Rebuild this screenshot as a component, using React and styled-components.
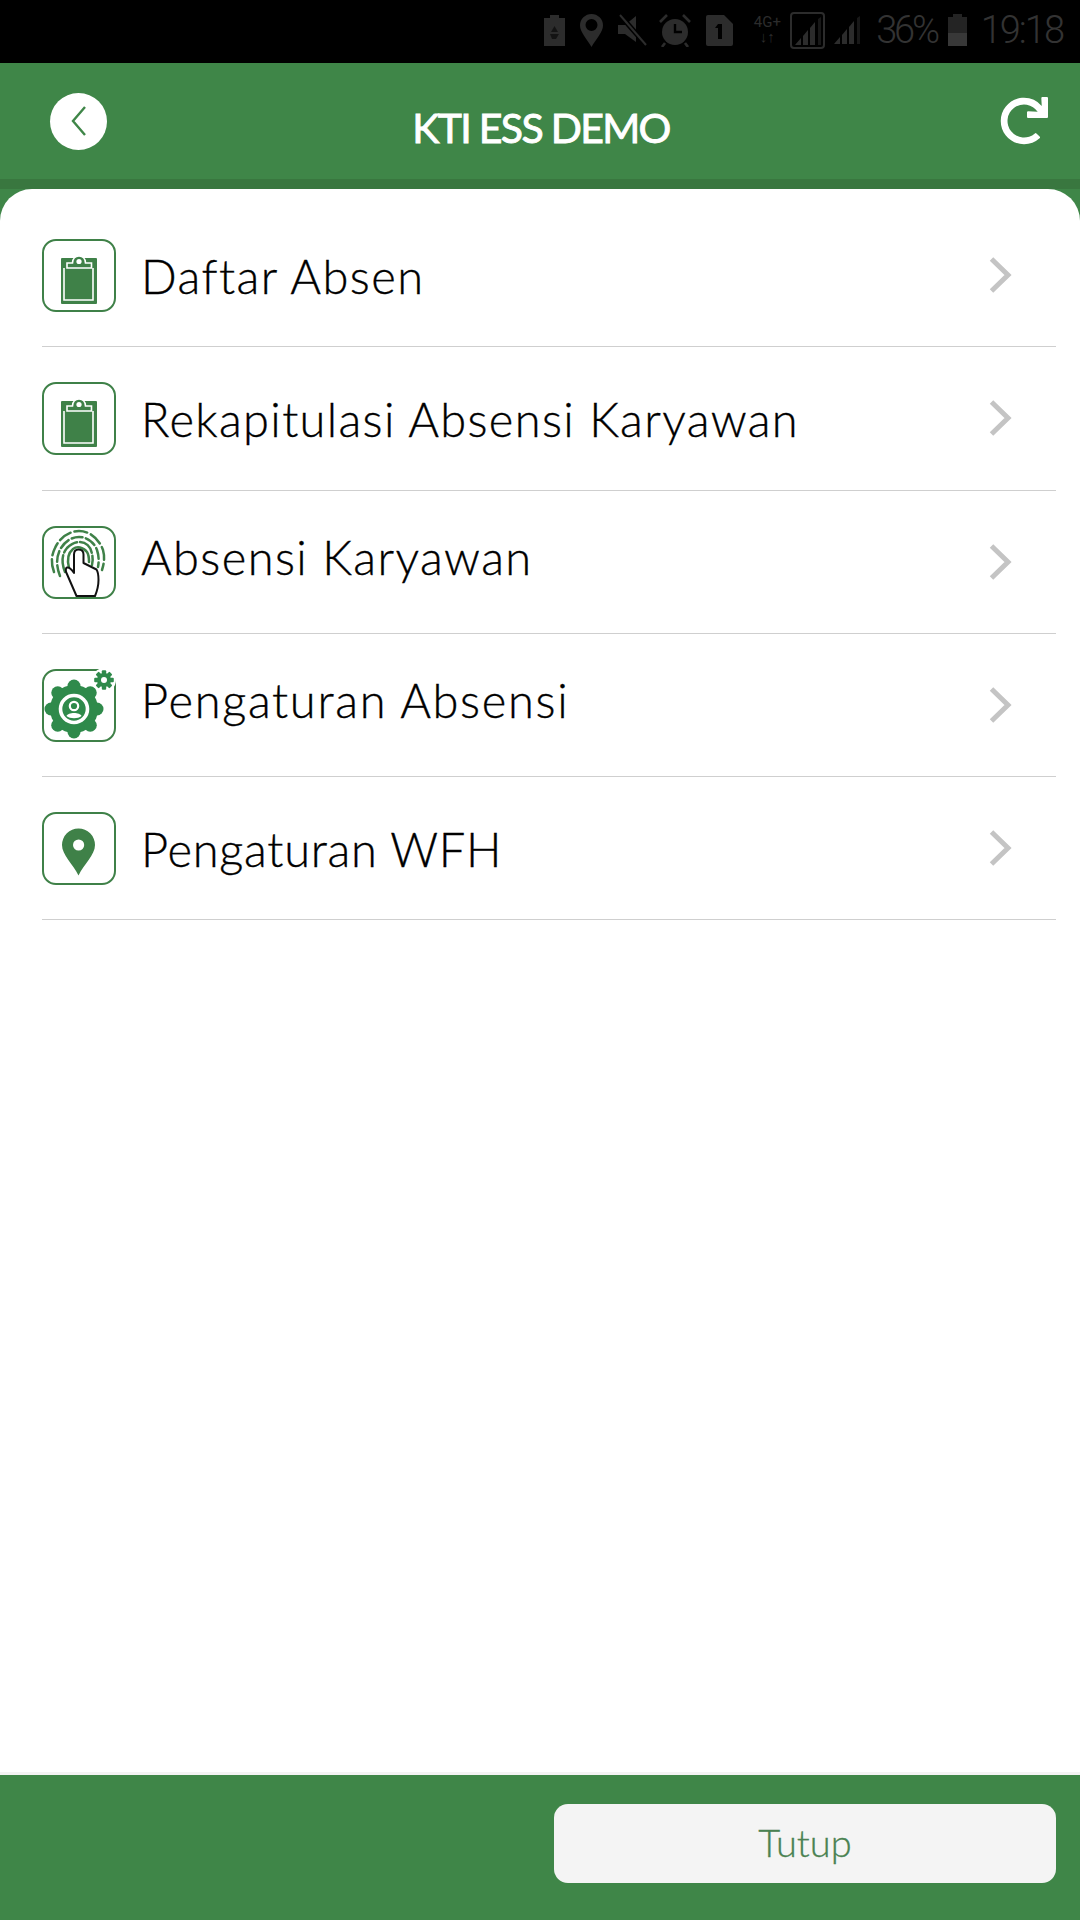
import React from 'react';
import styled, { createGlobalStyle } from 'styled-components';
import { FaRedo } from 'react-icons/fa';

const GREEN = '#3f8648';
const ICON_GREEN = '#3f8148';
const GEAR_GREEN = '#2f8a4b';
const STATUS = '#2c2c2c';

const GlobalStyle = createGlobalStyle`
  html, body { margin: 0; padding: 0; background: #fff; }
  * { box-sizing: border-box; }
`;

const Page = styled.div`
  width: 1080px;
  height: 1920px;
  display: flex;
  flex-direction: column;
  overflow: hidden;
  font-family: Lato, "Liberation Sans", sans-serif;
  background: ${GREEN};
`;

const StatusBar = styled.div`
  height: 63px;
  flex: none;
  background: #000;
  display: flex;
  align-items: center;
  justify-content: flex-end;
  padding: 0 17px 3px 0;
  color: ${STATUS};
`;

const StatusSlot = styled.div`
  display: flex;
  margin-left: ${(p) => p.$gap}px;
`;

const StatusText = styled.span`
  font-family: Roboto, sans-serif;
  font-weight: 300;
  font-size: 38px;
  line-height: 1;
  letter-spacing: ${(p) => p.$spacing}px;
  margin-left: ${(p) => p.$gap}px;
  color: #333;
`;

const Network = styled.div`
  width: 32px;
  margin-left: 18px;
  font-family: Roboto, sans-serif;
  font-size: 15px;
  line-height: 15px;
  color: ${STATUS};
  text-align: center;
`;

const Header = styled.header`
  height: 126px;
  flex: none;
  background: ${GREEN};
  border-bottom: 10px solid #39773f;
  display: grid;
  grid-template-columns: 1fr auto 1fr;
  align-items: center;
  padding: 0 32px 0 50px;
  color: #fff;
`;

const BackButton = styled.div`
  width: 57px;
  height: 57px;
  border-radius: 50%;
  background: #fff;
  display: flex;
  align-items: center;
  justify-content: center;
`;

const RefreshSlot = styled.div`
  display: flex;
  justify-content: flex-end;
`;

const Title = styled.h1`
  margin: 12px 16px 0 0;
  font-size: 41px;
  font-weight: 400;
  letter-spacing: -1.7px;
  -webkit-text-stroke: 0.9px #fff;
`;

const Body = styled.main`
  flex: 1;
  background: #fff;
  border-radius: 32px 32px 0 0;
  padding: 15px 24px 0 42px;
`;

const Row = styled.div`
  height: 143.3px;
  display: flex;
  align-items: center;
  border-bottom: 1.5px solid #cfcfcf;
  padding-right: 44px;
`;

const IconBox = styled.div`
  width: 74px;
  height: 73px;
  flex: none;
  margin-top: 1px;
  svg { display: block; overflow: visible; }
`;

const Label = styled.div`
  flex: 1;
  margin-left: 25px;
  margin-top: ${(p) => p.$shift}px;
  font-size: 47px;
  font-weight: 300;
  color: #000;
  letter-spacing: ${(p) => p.$spacing}px;
  -webkit-text-stroke: 0.35px #000;
`;

const Footer = styled.footer`
  height: 145px;
  flex: none;
  background: ${GREEN};
  box-shadow: 0 -3px 0 #f3f3f3;
  display: flex;
  align-items: flex-start;
  justify-content: flex-end;
  padding: 29px 24px 0 0;
`;

const CloseButton = styled.button`
  width: 502px;
  height: 79px;
  border: 0;
  border-radius: 14px;
  padding: 0 0 4px;
  background: #f4f4f4;
  color: #4a8252;
  font-family: Lato, sans-serif;
  font-size: 38px;
  font-weight: 300;
  -webkit-text-stroke: 0.3px #4a8252;
`;

const Frame = ({ children }) => (
  <svg width="74" height="73" viewBox="0 0 74 73">
    <rect x="1" y="1" width="72" height="71" rx="13" fill="none" stroke={ICON_GREEN} strokeWidth="2" />
    {children}
  </svg>
);

const ClipboardIcon = () => (
  <Frame>
    <rect x="19" y="19" width="36" height="46" rx="1" fill={ICON_GREEN} />
    <path d="M22 29 V61 H51 V29" fill="none" stroke="#fff" strokeWidth="1.6" />
    <path d="M25 29 V24 H30.5 C31 14.5 43 14.5 43.5 24 H49.5 V29 Z" fill={ICON_GREEN} stroke="#fff" strokeWidth="1.6" />
    <circle cx="37" cy="22.5" r="2.6" fill="#fff" />
  </Frame>
);

const FingerprintIcon = () => (
  <Frame>
    <g fill="none" stroke={ICON_GREEN} strokeWidth="2.5" strokeLinecap="round">
      <path d="M12 46 C9 38 9 30 13 22 C18 11 28 5 37 5 C48 5 57 13 61 24 C63 31 62 38 60 44" strokeDasharray="13 4" />
      <path d="M18 50 C14 40 14 30 19 22 C24 14 31 11 37 11 C45 11 52 16 55 24 C57 30 57 36 56 41" strokeDasharray="11 3.5" />
      <path d="M23 46 C19 36 20 28 25 22 C29 18 33 16 37 16 C44 16 49 21 50 28 C51 32 51 35 50 39" strokeDasharray="17 3" />
      <path d="M27 42 C25 34 26 27 31 23 C35 20 41 21 45 26 C47 29 47 32 47 36" />
    </g>
    <path
      d="M36.5 23.5 C33.5 23.5 32 25.5 32 28.5 V47 C30 44 27.5 41 25 41.5 C23.5 42 23.5 45 24.5 47 L34.5 70 H53 C55.5 64 56.5 59 56.5 54 C56.5 49 55.5 45 54.5 43.5 L41.5 37 V28.5 C41.5 25.5 39.5 23.5 36.5 23.5 Z"
      fill="#fff"
      stroke="#111"
      strokeWidth="2"
      strokeLinejoin="round"
    />
  </Frame>
);

const LOBES = [0, 45, 90, 135, 180, 225, 270, 315];

const SettingsIcon = () => (
  <Frame>
    <g fill={GEAR_GREEN}>
      <circle cx="32" cy="40" r="24" />
      {LOBES.map((a) => (
        <circle
          key={a}
          cx={32 + 23 * Math.cos((a * Math.PI) / 180)}
          cy={40 + 23 * Math.sin((a * Math.PI) / 180)}
          r="6.5"
        />
      ))}
    </g>
    <circle cx="32" cy="40" r="13.5" fill="none" stroke="#fff" strokeWidth="3.6" />
    <circle cx="32" cy="37" r="4.2" fill="none" stroke="#fff" strokeWidth="2.2" />
    <path d="M24.5 47 C26 43 38 43 39.5 47 C36 50 28 50 24.5 47 Z" fill="#fff" />
    <circle cx="62" cy="11" r="12" fill="#fff" />
    <g fill={GEAR_GREEN}>
      <circle cx="62" cy="11" r="7" />
      {LOBES.map((a) => (
        <rect key={a} x="59.8" y="1.2" width="4.4" height="5" rx="1" transform={`rotate(${a} 62 11)`} />
      ))}
    </g>
    <circle cx="62" cy="11" r="3" fill="#fff" />
  </Frame>
);

const PinIcon = () => (
  <Frame>
    <path
      d="M36.5 63.5 C31 52 20 43 20 33 A16.5 16.5 0 0 1 53 33 C53 43 42 52 36.5 63.5 Z"
      fill={ICON_GREEN}
    />
    <circle cx="36.6" cy="33" r="5.6" fill="#fff" />
  </Frame>
);

const Chevron = () => (
  <svg width="24" height="38" viewBox="0 0 24 38" fill="none">
    <path d="M3.5 3 L20 19 L3.5 35" stroke="#c4c4c4" strokeWidth="5" />
  </svg>
);

const BatterySaver = () => (
  <svg width="21" height="31" viewBox="0 0 21 31">
    <path d="M6 0 H15 V3 H21 V31 H0 V3 H6 Z" fill={STATUS} />
    <path d="M10.5 11 L14 17 H7 Z M6 19 H15 L12 24 H8 Z" fill="#000" opacity="0.55" />
  </svg>
);

const LocationGlyph = () => (
  <svg width="23" height="33" viewBox="0 0 23 33">
    <path
      fillRule="evenodd"
      d="M11.5 33 C7 25 0 18 0 11.5 A11.5 11.5 0 0 1 23 11.5 C23 18 16 25 11.5 33 Z M11.5 5 A6 6 0 1 0 11.5 17 A6 6 0 1 0 11.5 5 Z"
      fill={STATUS}
    />
  </svg>
);

const MuteGlyph = () => (
  <svg width="29" height="32" viewBox="0 0 29 32">
    <path d="M0 11 H7 L18 2 V28 L7 20 H0 Z" fill={STATUS} />
    <path d="M2 1 L28 31" stroke="#000" strokeWidth="5" />
    <path d="M2 1 L28 31" stroke={STATUS} strokeWidth="2" />
  </svg>
);

const AlarmGlyph = () => (
  <svg width="32" height="33" viewBox="0 0 32 33">
    <circle cx="16" cy="18" r="13" fill={STATUS} />
    <path d="M16 10 V18 H23" stroke="#000" strokeWidth="2.4" fill="none" />
    <path d="M1 8 L8 1 M31 8 L24 1 M6 29 L3 33 M26 29 L29 33" stroke={STATUS} strokeWidth="2.6" />
  </svg>
);

const SimGlyph = () => (
  <svg width="27" height="31" viewBox="0 0 27 31">
    <path d="M2 0 H18 L27 9 V29 A2 2 0 0 1 25 31 H2 A2 2 0 0 1 0 29 V2 A2 2 0 0 1 2 0 Z" fill={STATUS} />
    <path d="M12 9 H16 V24 H12 V13 H9 Z" fill="#000" />
  </svg>
);

const Bars = ({ color }) => (
  <g fill={color}>
    <path d="M0 28 L6 21 V28 Z" />
    <path d="M8 19 L13 13 V28 H8 Z" />
    <path d="M15 11 L20 5 V28 H15 Z" />
    <path d="M23 2 L26 0 V28 H23 Z" opacity="0.55" />
  </g>
);

const BoxedSignal = () => (
  <svg width="35" height="37" viewBox="0 0 35 37">
    <rect x="1" y="1" width="33" height="35" rx="3" fill="none" stroke={STATUS} strokeWidth="2" />
    <g transform="translate(5 5)"><Bars color={STATUS} /></g>
  </svg>
);

const PlainSignal = () => (
  <svg width="31" height="28" viewBox="0 0 27 28"><Bars color={STATUS} /></svg>
);

const BatteryGlyph = () => (
  <svg width="19" height="32" viewBox="0 0 19 32">
    <path d="M5 0 H14 V3 H19 V32 H0 V3 H5 Z" fill="#242424" />
    <rect x="0" y="19" width="19" height="13" fill="#383838" />
  </svg>
);

const MENU = [
  { label: 'Daftar Absen', icon: <ClipboardIcon />, spacing: 1.45, shift: 2 },
  { label: 'Rekapitulasi Absensi Karyawan', icon: <ClipboardIcon />, spacing: 1.35, shift: 2 },
  { label: 'Absensi Karyawan', icon: <FingerprintIcon />, spacing: 1.4, shift: -9 },
  { label: 'Pengaturan Absensi', icon: <SettingsIcon />, spacing: 1.7, shift: -10 },
  { label: 'Pengaturan WFH', icon: <PinIcon />, spacing: 0.75, shift: 2 },
];

export default function App() {
  return (
    <Page>
      <GlobalStyle />
      <StatusBar>
        <StatusSlot $gap={0}><BatterySaver /></StatusSlot>
        <StatusSlot $gap={15}><LocationGlyph /></StatusSlot>
        <StatusSlot $gap={15}><MuteGlyph /></StatusSlot>
        <StatusSlot $gap={12}><AlarmGlyph /></StatusSlot>
        <StatusSlot $gap={15}><SimGlyph /></StatusSlot>
        <Network>4G+<br />↓↑</Network>
        <StatusSlot $gap={7}><BoxedSignal /></StatusSlot>
        <StatusSlot $gap={7}><PlainSignal /></StatusSlot>
        <StatusText $gap={13} $spacing={-3.3}>36%</StatusText>
        <StatusSlot $gap={11}><BatteryGlyph /></StatusSlot>
        <StatusText $gap={14} $spacing={-2}>19:18</StatusText>
      </StatusBar>
      <Header>
        <BackButton>
          <svg width="20" height="34" viewBox="0 0 20 34" fill="none">
            <path d="M16 3 L4 17 L16 31" stroke={GREEN} strokeWidth="2.4" />
          </svg>
        </BackButton>
        <Title>KTI ESS DEMO</Title>
        <RefreshSlot><FaRedo size={48} /></RefreshSlot>
      </Header>
      <Body>
        {MENU.map((item) => (
          <Row key={item.label}>
            <IconBox>{item.icon}</IconBox>
            <Label $spacing={item.spacing} $shift={item.shift}>{item.label}</Label>
            <Chevron />
          </Row>
        ))}
      </Body>
      <Footer>
        <CloseButton>Tutup</CloseButton>
      </Footer>
    </Page>
  );
}
